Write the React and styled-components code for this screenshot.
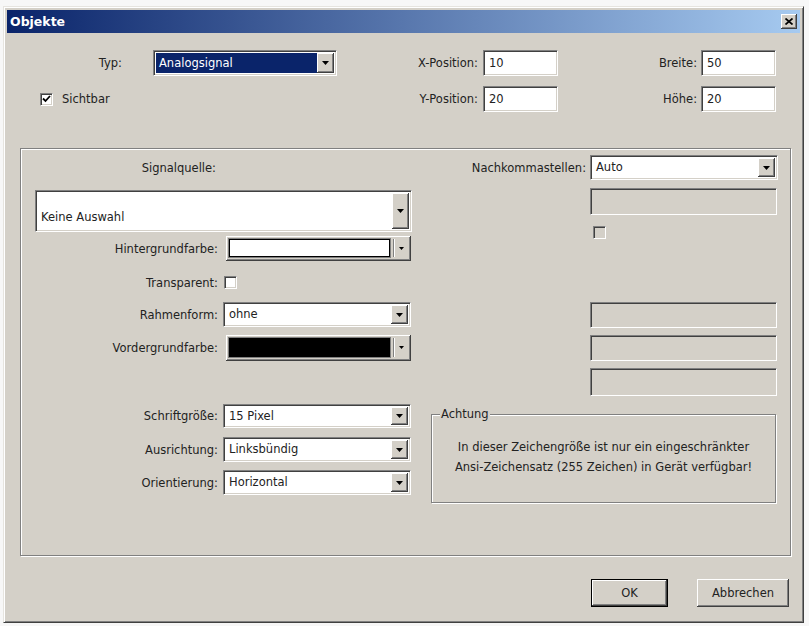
import React from 'react';
import styled, { createGlobalStyle } from 'styled-components';

const GlobalStyle = createGlobalStyle`
  html, body { margin: 0; padding: 0; background: #f7f7f7; }
  body {
    font-family: "DejaVu Sans", Verdana, sans-serif;
    font-size: 11.5px;
    color: #222;
  }
  * { box-sizing: border-box; }
`;

const Page = styled.div`
  width: 809px;
  height: 626px;
  padding: 6px 5px 3px 3px;
`;

const Window = styled.div`
  height: 100%;
  display: flex;
  flex-direction: column;
  background: #d4d0c8;
  border: 1px solid;
  border-color: #e6e4df #404040 #404040 #e6e4df;
  box-shadow: inset 1px 1px #ffffff, inset -1px -1px #808080;
  padding: 3px;
`;

const TitleBar = styled.div`
  height: 23px;
  flex: none;
  display: flex;
  align-items: center;
  justify-content: space-between;
  padding: 0 3px;
  background: linear-gradient(to right, #0a246a, #a6caf0);
`;

const Title = styled.span`
  color: #fff;
  font-weight: bold;
  font-size: 12.5px;
`;

const raised = `
  background: #d4d0c8;
  box-shadow: inset -1px -1px #404040, inset 1px 1px #ffffff,
    inset -2px -2px #808080, inset 2px 2px #d4d0c8;
`;

const CloseButton = styled.div`
  width: 16px;
  height: 15px;
  display: flex;
  align-items: center;
  justify-content: center;
  ${raised}
`;

const TopGrid = styled.div`
  display: grid;
  grid-template-columns: 146px 184px 146px 75px 143px 75px;
  grid-template-rows: 26px 26px;
  row-gap: 10px;
  margin-top: 17px;
`;

const Label = styled.label`
  align-self: center;
  text-align: right;
  white-space: nowrap;
  padding-right: ${p => p.$pr || 0}px;
`;

const Field = styled.div`
  display: flex;
  height: ${p => p.$h}px;
  width: ${p => (p.$w ? `${p.$w}px` : '100%')};
  margin-left: ${p => p.$ml || 0}px;
  background: ${p => (p.$disabled ? '#d4d0c8' : '#ffffff')};
  border: 1px solid;
  border-color: #808080 #ffffff #ffffff #808080;
  box-shadow: inset 1px 1px #404040, inset -1px -1px #d4d0c8;
  padding: 2px;
`;

const Value = styled.div`
  flex: 1;
  display: flex;
  align-items: ${p => (p.$tall ? 'flex-end' : 'center')};
  padding: ${p => (p.$tall ? '0 0 5px 3px' : '0 0 1px 3px')};
  white-space: nowrap;
  overflow: hidden;
  background: ${p => (p.$highlight ? '#0a246a' : 'transparent')};
  color: ${p => (p.$highlight ? '#ffffff' : '#222')};
`;

const DropButton = styled.div`
  width: 17px;
  flex: none;
  display: flex;
  align-items: center;
  justify-content: center;
  ${raised}
`;

const Arrow = ({ w = 7, h = 4 }) => (
  <svg width={w} height={h} viewBox={`0 0 ${w} ${h}`}>
    <polygon points={`0,0 ${w},0 ${w / 2},${h}`} fill="#000" />
  </svg>
);

function Select({ value, h = 25, highlight, tall, w }) {
  return (
    <Field $h={h} $w={w}>
      <Value $highlight={highlight} $tall={tall}>{value}</Value>
      <DropButton>
        <Arrow />
      </DropButton>
    </Field>
  );
}

function TextInput({ value, h = 26, disabled }) {
  return (
    <Field $h={h} $disabled={disabled}>
      <Value>{value}</Value>
    </Field>
  );
}

const CheckBox = styled.div`
  width: 13px;
  height: 13px;
  flex: none;
  margin-left: ${p => p.$ml || 0}px;
  display: flex;
  align-items: center;
  justify-content: center;
  background: ${p => (p.$disabled ? '#d4d0c8' : '#ffffff')};
  border: 1px solid;
  border-color: #808080 #ffffff #ffffff #808080;
  box-shadow: inset 1px 1px #404040, inset -1px -1px #d4d0c8;
`;

const Check = () => (
  <svg width="9" height="8" viewBox="0 0 9 8">
    <polyline points="1,3.5 3.5,6 8,1" fill="none" stroke="#000" strokeWidth="1.8" />
  </svg>
);

const CheckRow = styled.div`
  grid-column: 1 / 3;
  justify-self: start;
  align-self: center;
  display: flex;
  align-items: center;
  gap: 9px;
  margin-left: 33px;
`;

const GroupBox = styled.div`
  height: 408px;
  margin: 36px 9px 0 13px;
  border: 1px solid #808080;
  box-shadow: inset 1px 1px #ffffff, 1px 1px #ffffff;
  display: flex;
  gap: 19px;
  padding: 6px 0 0 14px;
`;

const Column = styled.div`
  width: ${p => p.$w}px;
  display: flex;
  flex-direction: column;
`;

const FormRow = styled.div`
  display: grid;
  grid-template-columns: ${p => p.$cols};
  column-gap: ${p => p.$gap}px;
  align-items: center;
  height: ${p => p.$h}px;
  margin-top: ${p => p.$mt || 0}px;
`;

const TallSelectWrap = styled.div`
  margin-top: 10px;
`;

const ColorCombo = styled.div`
  height: ${p => p.$h}px;
  margin-left: 3px;
  display: flex;
  align-items: stretch;
  padding: 3px 3px 4px 3px;
  ${raised}
`;

const Swatch = styled.div`
  flex: 1;
  background: ${p => p.$color};
  border: 1px solid #000;
  box-shadow: 0 0 0 1px #808080;
`;

const Separator = styled.div`
  width: 2px;
  margin-left: 3px;
  border-left: 1px solid #808080;
  border-right: 1px solid #ffffff;
`;

const ArrowSlot = styled.div`
  width: 13px;
  display: flex;
  align-items: center;
  justify-content: center;
`;

const Fieldset = styled.fieldset`
  margin: 11px 0 0 0;
  width: 345px;
  height: 96px;
  min-width: 0;
  border: 1px solid #808080;
  box-shadow: inset 1px 1px #ffffff, 1px 1px #ffffff;
  padding: 16px 8px 0 8px;
`;

const Legend = styled.legend`
  padding: 0 1px;
  background: #d4d0c8;
  line-height: 14px;
  text-align: left;
`;

const Notice = styled.div`
  text-align: center;
  line-height: 20px;
`;

const Footer = styled.div`
  display: flex;
  justify-content: flex-end;
  gap: 29px;
  padding: 23px 11px 0 0;
`;

const Button = styled.button`
  width: ${p => p.$w}px;
  height: 28px;
  font: inherit;
  color: #222;
  padding: 0;
  border: ${p => (p.$default ? '1px solid #000' : 'none')};
  ${raised}
`;

export default function App() {
  return (
    <>
      <GlobalStyle />
      <Page>
        <Window>
          <TitleBar>
            <Title>Objekte</Title>
            <CloseButton>
              <svg width="8" height="7" viewBox="0 0 8 7">
                <path d="M0.5 0.5 L7.5 6.5 M7.5 0.5 L0.5 6.5" stroke="#000" strokeWidth="1.7" />
              </svg>
            </CloseButton>
          </TitleBar>

          <TopGrid>
            <Label $pr={31}>Typ:</Label>
            <Select value="Analogsignal" h={26} highlight />
            <Label $pr={5}>X-Position:</Label>
            <TextInput value="10" />
            <Label $pr={4}>Breite:</Label>
            <TextInput value="50" />

            <CheckRow>
              <CheckBox>
                <Check />
              </CheckBox>
              <span>Sichtbar</span>
            </CheckRow>
            <Label $pr={5}>Y-Position:</Label>
            <TextInput value="20" />
            <Label $pr={4}>Höhe:</Label>
            <TextInput value="20" />
          </TopGrid>

          <GroupBox>
            <Column $w={377}>
              <FormRow $cols="181px 188px" $gap={5} $h={25}>
                <Label>Signalquelle:</Label>
              </FormRow>
              <TallSelectWrap>
                <Select value="Keine Auswahl" h={42} tall />
              </TallSelectWrap>
              <FormRow $cols="183px 188px" $gap={5} $h={25} $mt={4}>
                <Label>Hintergrundfarbe:</Label>
                <ColorCombo $h={25}>
                  <Swatch $color="#ffffff" />
                  <Separator />
                  <ArrowSlot>
                    <Arrow w={5} h={3} />
                  </ArrowSlot>
                </ColorCombo>
              </FormRow>
              <FormRow $cols="183px 188px" $gap={5} $h={25} $mt={9}>
                <Label>Transparent:</Label>
                <CheckBox $ml={1} />
              </FormRow>
              <FormRow $cols="183px 188px" $gap={5} $h={25} $mt={7}>
                <Label>Rahmenform:</Label>
                <Select value="ohne" h={25} />
              </FormRow>
              <FormRow $cols="183px 188px" $gap={5} $h={26} $mt={8}>
                <Label>Vordergrundfarbe:</Label>
                <ColorCombo $h={26}>
                  <Swatch $color="#000000" />
                  <Separator />
                  <ArrowSlot>
                    <Arrow w={5} h={3} />
                  </ArrowSlot>
                </ColorCombo>
              </FormRow>
              <FormRow $cols="183px 188px" $gap={5} $h={24} $mt={43}>
                <Label>Schriftgröße:</Label>
                <Select value="15 Pixel" h={24} />
              </FormRow>
              <FormRow $cols="183px 188px" $gap={5} $h={25} $mt={9}>
                <Label>Ausrichtung:</Label>
                <Select value="Linksbündig" h={25} />
              </FormRow>
              <FormRow $cols="183px 188px" $gap={5} $h={25} $mt={8}>
                <Label>Orientierung:</Label>
                <Select value="Horizontal" h={25} />
              </FormRow>
            </Column>

            <Column $w={347}>
              <FormRow $cols="155px 188px" $gap={4} $h={25}>
                <Label>Nachkommastellen:</Label>
                <Select value="Auto" h={25} />
              </FormRow>
              <FormRow $cols="155px 187px" $gap={4} $h={27} $mt={8}>
                <span />
                <TextInput h={27} disabled />
              </FormRow>
              <FormRow $cols="155px 187px" $gap={4} $h={13} $mt={11}>
                <span />
                <CheckBox $ml={3} $disabled />
              </FormRow>
              <FormRow $cols="155px 187px" $gap={4} $h={26} $mt={63}>
                <span />
                <TextInput h={26} disabled />
              </FormRow>
              <FormRow $cols="155px 187px" $gap={4} $h={26} $mt={7}>
                <span />
                <TextInput h={26} disabled />
              </FormRow>
              <FormRow $cols="155px 187px" $gap={4} $h={28} $mt={7}>
                <span />
                <TextInput h={28} disabled />
              </FormRow>
              <Fieldset>
                <Legend>Achtung</Legend>
                <Notice>
                  In dieser Zeichengröße ist nur ein eingeschränkter
                  <br />
                  Ansi-Zeichensatz (255 Zeichen) in Gerät verfügbar!
                </Notice>
              </Fieldset>
            </Column>
          </GroupBox>

          <Footer>
            <Button $w={77} $default>OK</Button>
            <Button $w={92}>Abbrechen</Button>
          </Footer>
        </Window>
      </Page>
    </>
  );
}
